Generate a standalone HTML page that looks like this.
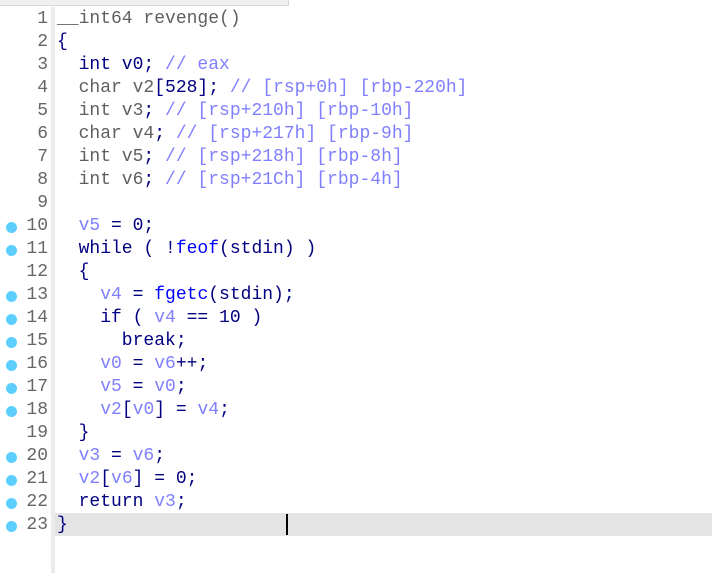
<!DOCTYPE html>
<html><head><style>
body{margin:0;width:712px;height:573px;background:#fff;overflow:hidden;position:relative;font-family:"Liberation Mono",monospace;font-size:18px}
.top{position:absolute;left:0;top:0;width:288px;height:5px;background:#f0f0f0;border-bottom:1px solid #d8d8d8;border-right:1px solid #d8d8d8}
.gut{position:absolute;left:51px;top:7px;width:4px;height:566px;background:#ececec}
.hl{position:absolute;left:55px;top:513px;width:657px;height:23px;background:#e4e4e4}
.cur{position:absolute;left:286px;top:514px;width:2px;height:21px;background:#000}
.l{position:absolute;left:0;height:23px;line-height:23px;white-space:pre}
.n{position:absolute;left:0;width:48px;text-align:right;color:#666}
.c{position:absolute;left:57px;color:#000080}
.d{position:absolute;left:6px;top:7px;width:11px;height:11px;border-radius:50%;background:#5ccfff}
.g{color:#606060}.v{color:#8080ff}.f{color:#0000ff}
</style></head><body>
<div class="top"></div><div class="gut"></div><div class="hl"></div><div class="cur"></div>
<div class="l" style="top:8px"><span class="n">1</span><span class="c"><span class="g">__int64 revenge()</span></span></div>
<div class="l" style="top:31px"><span class="n">2</span><span class="c">{</span></div>
<div class="l" style="top:54px"><span class="n">3</span><span class="c">  int v0; <span class="v">// eax</span></span></div>
<div class="l" style="top:77px"><span class="n">4</span><span class="c"><span class="g">  char v2</span>[528]; <span class="v">// [rsp+0h] [rbp-220h]</span></span></div>
<div class="l" style="top:100px"><span class="n">5</span><span class="c"><span class="g">  int v3</span>; <span class="v">// [rsp+210h] [rbp-10h]</span></span></div>
<div class="l" style="top:123px"><span class="n">6</span><span class="c"><span class="g">  char v4</span>; <span class="v">// [rsp+217h] [rbp-9h]</span></span></div>
<div class="l" style="top:146px"><span class="n">7</span><span class="c"><span class="g">  int v5</span>; <span class="v">// [rsp+218h] [rbp-8h]</span></span></div>
<div class="l" style="top:169px"><span class="n">8</span><span class="c"><span class="g">  int v6</span>; <span class="v">// [rsp+21Ch] [rbp-4h]</span></span></div>
<div class="l" style="top:192px"><span class="n">9</span></div>
<div class="l" style="top:215px"><span class="d"></span><span class="n">10</span><span class="c">  <span class="v">v5</span> = 0;</span></div>
<div class="l" style="top:238px"><span class="d"></span><span class="n">11</span><span class="c">  while ( !<span class="f">feof</span>(stdin) )</span></div>
<div class="l" style="top:261px"><span class="n">12</span><span class="c">  {</span></div>
<div class="l" style="top:284px"><span class="d"></span><span class="n">13</span><span class="c">    <span class="v">v4</span> = <span class="f">fgetc</span>(stdin);</span></div>
<div class="l" style="top:307px"><span class="d"></span><span class="n">14</span><span class="c">    if ( <span class="v">v4</span> == 10 )</span></div>
<div class="l" style="top:330px"><span class="d"></span><span class="n">15</span><span class="c">      break;</span></div>
<div class="l" style="top:353px"><span class="d"></span><span class="n">16</span><span class="c">    <span class="v">v0</span> = <span class="v">v6</span>++;</span></div>
<div class="l" style="top:376px"><span class="d"></span><span class="n">17</span><span class="c">    <span class="v">v5</span> = <span class="v">v0</span>;</span></div>
<div class="l" style="top:399px"><span class="d"></span><span class="n">18</span><span class="c">    <span class="v">v2</span>[<span class="v">v0</span>] = <span class="v">v4</span>;</span></div>
<div class="l" style="top:422px"><span class="n">19</span><span class="c">  }</span></div>
<div class="l" style="top:445px"><span class="d"></span><span class="n">20</span><span class="c">  <span class="v">v3</span> = <span class="v">v6</span>;</span></div>
<div class="l" style="top:468px"><span class="d"></span><span class="n">21</span><span class="c">  <span class="v">v2</span>[<span class="v">v6</span>] = 0;</span></div>
<div class="l" style="top:491px"><span class="d"></span><span class="n">22</span><span class="c">  return <span class="v">v3</span>;</span></div>
<div class="l" style="top:514px"><span class="d"></span><span class="n">23</span><span class="c">}</span></div>
</body></html>
